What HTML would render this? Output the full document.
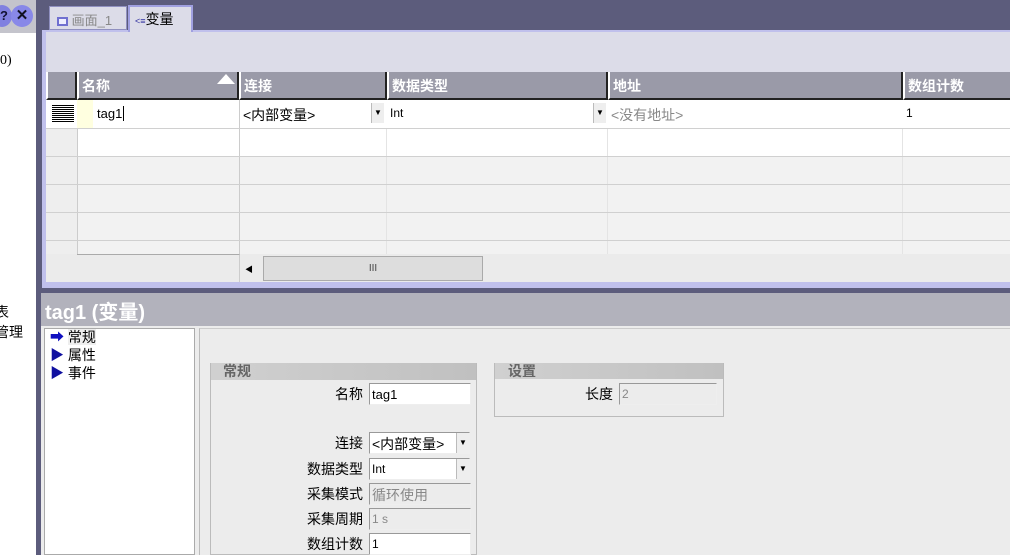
<!DOCTYPE html><html><head><meta charset="utf-8"><style>
*{margin:0;padding:0;box-sizing:border-box}
body{width:1010px;height:555px;overflow:hidden;position:relative;background:#fff;font-family:"Liberation Sans","Noto Sans CJK SC",sans-serif;font-size:13px;color:#000}
.a{position:absolute}
.hd{position:absolute;top:72px;height:28px;background:#9a9aa8;color:#fff;font-weight:bold;font-size:14px;padding:4px 3px;border-left:2px solid #fff;border-right:2px solid #222;border-bottom:2px solid #222}
.vl{position:absolute;width:1px;background:#e4e4e4}
.hl{position:absolute;height:1px;background:#d0d0d0;left:46px;width:964px}
.lbl{position:absolute;text-align:right;width:150px;font-size:14px}
.inp{position:absolute;height:22px;background:#fff;border:1px solid #999;border-right-color:#eee;border-bottom-color:#eee;font-size:13px;padding:3px 2px}
.dis{background:#ececec;color:#888}
.dd{position:absolute;width:13px;height:20px;background:#eee;border-left:1px solid #bbb;font-size:8px;text-align:center;line-height:20px}
</style></head><body>
<div class="a" style="left:0;top:0;width:36px;height:33px;background:#c4c4cc"></div>
<div class="a" style="left:-8px;top:5px;width:20px;height:22px;border-radius:50%;background:#8080e0;color:#113;font-weight:bold;text-align:right;padding-right:4px;line-height:22px">?</div>
<div class="a" style="left:11px;top:5px;width:22px;height:22px;border-radius:50%;background:#8888e8;color:#112;font-weight:bold;text-align:center;line-height:22px;font-size:15px">✕</div>
<div class="a" style="left:0;top:53px;font-size:14px;font-family:'Liberation Serif',serif">0)</div>
<div class="a" style="left:-5px;top:302px;font-size:14px">表</div>
<div class="a" style="left:-5px;top:322px;font-size:14px">管理</div>
<div class="a" style="left:36px;top:0;width:974px;height:555px;background:#5c5c7c"></div>
<div class="a" style="left:42px;top:30px;width:968px;height:258px;background:#c0c0ec"></div>
<div class="a" style="left:46px;top:32px;width:964px;height:250px;background:#dcdce8"></div>
<div class="a" style="left:49px;top:6px;width:78px;height:24px;background:#dcdce8;border:1px solid #9090c0;color:#888;font-size:13px;padding:3px 0 0 7px"><span style="display:inline-block;width:11px;height:9px;border:2px solid #7070d0;background:#eef;vertical-align:-1px"></span> 画面_1</div>
<div class="a" style="left:128px;top:5px;width:65px;height:27px;background:#dcdce8;border:2px solid #a0a0e0;border-bottom:none;font-size:14px;padding:2px 0 0 5px"><span style="font-size:9px;color:#3030a0">&lt;≡</span>变量</div>
<div class="a" style="left:46px;top:100px;width:964px;height:56px;background:#fff"></div>
<div class="a" style="left:46px;top:156px;width:964px;height:98px;background:#f2f2f2"></div>
<div class="a" style="left:46px;top:254px;width:964px;height:28px;background:#ebebeb"></div>
<div class="a" style="left:46px;top:100px;width:31px;height:154px;background:#eee"></div>
<div class="a" style="left:46px;top:100px;width:31px;height:28px;background:#fff"></div>
<div class="a" style="left:52px;top:105px;width:22px;height:18px;background:repeating-linear-gradient(#000 0 1px,#fff 1px 2px)"></div>
<div class="a" style="left:77px;top:100px;width:16px;height:28px;background:#ffffe0"></div>
<div class="hd" style="left:46px;width:31px"></div>
<div class="hd" style="left:77px;width:162px">名称<span style="position:absolute;right:2px;top:2px;width:0;height:0;border-left:9px solid transparent;border-right:9px solid transparent;border-bottom:10px solid #fff"></span></div>
<div class="hd" style="left:239px;width:148px">连接</div>
<div class="hd" style="left:387px;width:221px">数据类型</div>
<div class="hd" style="left:608px;width:295px">地址</div>
<div class="hd" style="left:903px;width:110px">数组计数</div>
<div class="vl" style="left:239px;top:100px;height:154px;background:#ccc"></div>
<div class="vl" style="left:386px;top:128px;height:126px"></div>
<div class="vl" style="left:607px;top:128px;height:126px"></div>
<div class="vl" style="left:902px;top:128px;height:126px"></div>
<div class="vl" style="left:77px;top:128px;height:154px;background:#ccc"></div>
<div class="hl" style="top:128px"></div><div class="hl" style="top:156px"></div><div class="hl" style="top:184px"></div><div class="hl" style="top:212px"></div><div class="hl" style="top:240px"></div>
<div class="a" style="left:77px;top:254px;width:163px;height:28px;border-top:1px solid #aaa;border-right:1px solid #ccc;background:#ebebeb"></div>
<div class="a" style="left:97px;top:106px">tag1<span style="border-left:1px solid #000;margin-left:1px"></span></div>
<div class="a" style="left:243px;top:105px;font-size:14px">&lt;内部变量&gt;</div>
<div class="dd" style="left:371px;top:103px">▼</div>
<div class="a" style="left:390px;top:106px;font-size:12px">Int</div>
<div class="dd" style="left:593px;top:103px">▼</div>
<div class="a" style="left:611px;top:105px;font-size:14px;color:#888">&lt;没有地址&gt;</div>
<div class="a" style="left:906px;top:106px;font-size:12px">1</div>
<div class="a" style="left:245px;top:264px;font-size:8px">◀</div>
<div class="a" style="left:263px;top:256px;width:220px;height:25px;background:#ddd;border:1px solid #aaa;text-align:center;font-size:10px;line-height:23px;color:#444">III</div>
<div class="a" style="left:42px;top:288px;width:968px;height:5px;background:#5c5c7c"></div>
<div class="a" style="left:41px;top:293px;width:969px;height:262px;background:#ececec"></div>
<div class="a" style="left:41px;top:293px;width:969px;height:33px;background:#b2b2bc;color:#fff;font-weight:bold;font-size:20px;padding:3px 4px">tag1 (变量)</div>
<div class="a" style="left:44px;top:328px;width:151px;height:227px;background:#fff;border:1px solid #aaa"></div>
<div class="a" style="left:50px;top:328px;font-size:14px;line-height:18px"><div><span style="color:#1010c0">➡</span> <span style="background:#eee">常规</span></div><div><span style="color:#1010a0">▶</span> 属性</div><div><span style="color:#1010a0">▶</span> 事件</div></div>
<div class="a" style="left:199px;top:328px;width:811px;height:227px;border-left:1px solid #bbb;border-top:1px solid #ccc"></div>
<div class="a" style="left:210px;top:363px;width:267px;height:192px;border:1px solid #bbb"></div>
<div class="a" style="left:211px;top:363px;width:265px;height:17px;background:linear-gradient(90deg,#d0d0d0,#c0c0c0);color:#666;font-weight:bold;font-size:14px;padding:0 12px;line-height:17px">常规</div>
<div class="a" style="left:494px;top:363px;width:230px;height:54px;border:1px solid #bbb"></div>
<div class="a" style="left:495px;top:363px;width:228px;height:16px;background:linear-gradient(90deg,#d0d0d0,#c0c0c0);color:#666;font-weight:bold;font-size:14px;padding:0 13px;line-height:17px">设置</div>
<div class="lbl" style="left:213px;top:384px">名称</div><div class="inp" style="left:369px;top:383px;width:102px">tag1</div>
<div class="lbl" style="left:213px;top:433px">连接</div><div class="inp" style="left:369px;top:432px;width:101px;font-size:14px;padding-top:1px">&lt;内部变量&gt;</div><div class="dd" style="left:456px;top:433px">▼</div>
<div class="lbl" style="left:213px;top:459px">数据类型</div><div class="inp" style="left:369px;top:458px;width:101px;font-size:12px">Int</div><div class="dd" style="left:456px;top:459px">▼</div>
<div class="lbl" style="left:213px;top:484px">采集模式</div><div class="inp dis" style="left:369px;top:483px;width:102px;font-size:14px;padding-top:1px">循环使用</div>
<div class="lbl" style="left:213px;top:509px">采集周期</div><div class="inp dis" style="left:369px;top:508px;width:102px;font-size:12px">1 s</div>
<div class="lbl" style="left:213px;top:534px">数组计数</div><div class="inp" style="left:369px;top:533px;width:102px;font-size:12px">1</div>
<div class="lbl" style="left:463px;top:384px">长度</div><div class="inp dis" style="left:619px;top:383px;width:98px;font-size:12px">2</div>
</body></html>
